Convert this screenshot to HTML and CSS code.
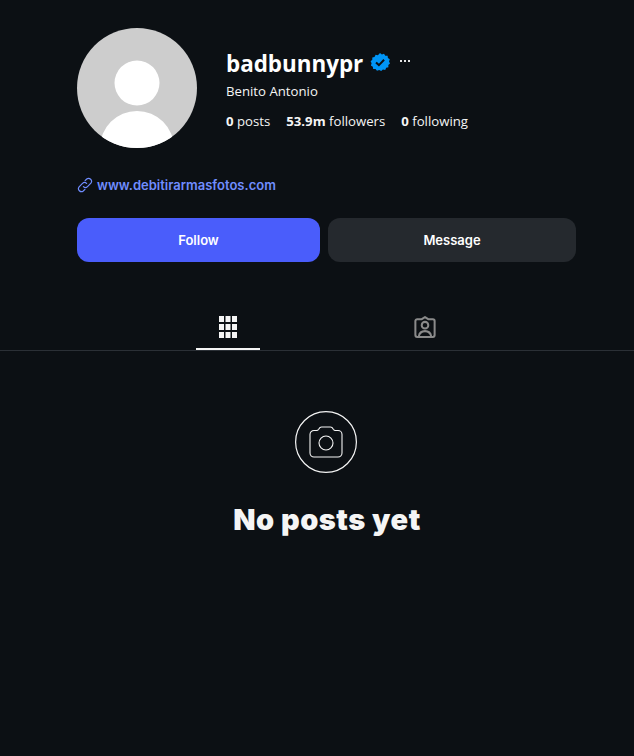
FILE: index.html
```html
<!DOCTYPE html>
<html lang="en">
<head>
    <meta charset="UTF-8">
    <meta name="viewport" content="width=device-width, initial-scale=1.0">
    <title>badbunnypr</title>
    <link rel="stylesheet" href="styles.css">
</head>
<body>
    <header class="profile">
        <div class="profile-top">
            <svg class="avatar" viewBox="0 0 120 120" width="120" height="120">
                <defs><clipPath id="avatarClip"><circle cx="60" cy="60" r="60"/></clipPath></defs>
                <g clip-path="url(#avatarClip)">
                    <rect width="120" height="120" fill="#cdcdcd"/>
                    <circle cx="60" cy="55" r="22.500" fill="#fff"/>
                    <circle cx="60" cy="120" r="37" fill="#fff"/>
                </g>
            </svg>
            <div class="info">
                <div class="name-row">
                    <h1 class="username">badbunnypr</h1>
                    <svg class="verified" viewBox="0 0 20 20" width="20" height="20">
                        <polygon fill="#0095f6" points="10,0.5 11.900,2 14,1.200 15.300,3.100 17.600,3.100 17.900,5.400 19.800,6.600 19,8.800 20,10.800 18.300,12.300 18.400,14.600 16.200,15.200 15.200,17.300 12.900,16.900 11.200,18.400 9.200,17.300 7,18.200 5.500,16.400 3.200,16.400 2.800,14.100 0.900,12.900 1.600,10.700 0.600,8.700 2.300,7.200 2.300,4.900 4.500,4.300 5.600,2.200 7.900,2.700" transform="translate(0 0.6)"/>
                        <path d="M6 10.400l2.900 2.700 5.200-5.400" fill="none" stroke="#0c1014" stroke-width="2"/>
                    </svg>
                    <div class="more"><span></span><span></span><span></span></div>
                </div>
                <div class="full-name">Benito Antonio</div>
                <ul class="stats">
                    <li><b>0</b> posts</li>
                    <li><b>53.9m</b> followers</li>
                    <li><b>0</b> following</li>
                </ul>
            </div>
        </div>
        <a class="site-link" href="#">
            <svg viewBox="0 0 16 16" width="16" height="16" fill="none" stroke="#708dff" stroke-width="1.200" stroke-linecap="round">
                <path d="M6.400 9.600a2.900 2.900 0 0 0 4.100 0l3.400-3.400a3 3 0 0 0-4.200-4.200L8.100 3.600"/>
                <path d="M9.600 6.400a2.900 2.900 0 0 0-4.100 0L2.100 9.800a3 3 0 0 0 4.200 4.200l1.600-1.600"/>
            </svg>
            <span>www.debitirarmasfotos.com</span>
        </a>
        <div class="actions">
            <button class="btn btn-follow">Follow</button>
            <button class="btn btn-message">Message</button>
        </div>
    </header>

    <nav class="tabs">
        <div class="tab active">
            <svg viewBox="0 0 18 22" width="18" height="22" fill="#f5f5f5">
                <rect x="0" y="0" width="5" height="6"/><rect x="6.500" y="0" width="5" height="6"/><rect x="13" y="0" width="5" height="6"/>
                <rect x="0" y="8" width="5" height="6"/><rect x="6.500" y="8" width="5" height="6"/><rect x="13" y="8" width="5" height="6"/>
                <rect x="0" y="16" width="5" height="6"/><rect x="6.500" y="16" width="5" height="6"/><rect x="13" y="16" width="5" height="6"/>
            </svg>
        </div>
        <div class="tab">
            <svg viewBox="0 0 24 24" width="22" height="22" fill="none" stroke="#8a8a8a" stroke-width="2.200" stroke-linejoin="round">
                <path d="M3.500 3.500h5L12 1.200l3.500 2.300h5a2 2 0 0 1 2 2v15.300a2 2 0 0 1-2 2h-17a2 2 0 0 1-2-2V5.500a2 2 0 0 1 2-2z"/>
                <circle cx="12" cy="10" r="3.600"/>
                <path d="M5.200 22.500c.6-3.900 3.200-6 6.800-6s6.200 2.100 6.800 6"/>
            </svg>
        </div>
    </nav>

    <section class="empty">
        <svg class="camera" viewBox="0 0 62 62" width="62" height="62" fill="none" stroke="#f5f5f5" stroke-linejoin="round">
            <circle cx="31" cy="31" r="30.400" stroke-width="1.200"/>
            <g transform="translate(14 15)" stroke-width="1.100">
                <path d="M5 4.500h2.500c1 0 1.700-.5 2.200-1.300C10.500 1.700 11.200 1 12.500 1h9c1.300 0 2 .7 2.800 2.200.5.800 1.200 1.300 2.200 1.300H29a4 4 0 0 1 4 4V27a4 4 0 0 1-4 4H5a4 4 0 0 1-4-4V8.500a4 4 0 0 1 4-4z"/>
                <circle cx="17" cy="17" r="7"/>
            </g>
        </svg>
        <h2 class="empty-title">No posts yet</h2>
    </section>
</body>
</html>
```

FILE: styles.css
```css
body {
    margin: 0;
    min-height: 756px;
    background-color: #0c1014;
    color: #f5f5f5;
    font-family: Inter, "Liberation Sans", sans-serif;
    overflow: hidden;
}

.profile {
    width: 499px;
    margin-left: 77px;
    padding-top: 28px;
}

.profile-top {
    display: flex;
    gap: 29px;
}

.avatar {
    display: block;
    flex-shrink: 0;
}

.info {
    padding-top: 19px;
}

.name-row {
    display: flex;
    align-items: center;
    height: 34px;
}

.username {
    margin: 0;
    font-family: "Open Sans", sans-serif;
    font-size: 22.4px;
    font-weight: 700;
    line-height: 34px;
    color: #fff;
}

.verified {
    margin-left: 7px;
    margin-bottom: 4px;
}

.more {
    display: flex;
    gap: 2px;
    margin-left: 10px;
    margin-bottom: 6px;
}

.more span {
    width: 2px;
    height: 2px;
    background-color: #e5e5e5;
}

.full-name {
    font-family: "Open Sans", sans-serif;
    font-size: 13.2px;
    line-height: 20px;
}

.stats {
    display: flex;
    gap: 16px;
    margin: 10px 0 0;
    padding: 0;
    list-style: none;
    font-family: "Open Sans", sans-serif;
    font-size: 13.2px;
    line-height: 20px;
}

.stats b {
    font-weight: 700;
}

.site-link {
    display: flex;
    align-items: center;
    gap: 4px;
    margin-top: 27px;
    height: 20px;
    color: #708dff;
    font-size: 13px;
    font-weight: 600;
    text-decoration: none;
}

.actions {
    display: flex;
    gap: 8px;
    margin-top: 23px;
}

.btn {
    height: 44px;
    border: none;
    border-radius: 12px;
    color: #fff;
    font-family: inherit;
    font-size: 13px;
    font-weight: 600;
}

.btn-follow {
    width: 243px;
    background-color: #4a5dfb;
}

.btn-message {
    width: 248px;
    background-color: #25292e;
}

.tabs {
    display: flex;
    justify-content: center;
    gap: 133px;
    height: 44px;
    margin-top: 44px;
    border-bottom: 1px solid #2b3036;
    padding-left: 18px;
}

.tab {
    display: flex;
    justify-content: center;
    width: 64px;
    height: 44px;
    padding-top: 10px;
    box-sizing: border-box;
}

.tab.active {
    border-bottom: 2px solid #f5f5f5;
}

.empty {
    display: flex;
    flex-direction: column;
    align-items: center;
    padding: 60px 0 0 18px;
}

.camera {
    display: block;
}

.empty-title {
    margin: 25px 0 0 2px;
    font-family: Inter, sans-serif;
    font-size: 29px;
    font-weight: 900;
    letter-spacing: 0.5px;
    line-height: 44px;
    color: #f5f5f5;
}
```
